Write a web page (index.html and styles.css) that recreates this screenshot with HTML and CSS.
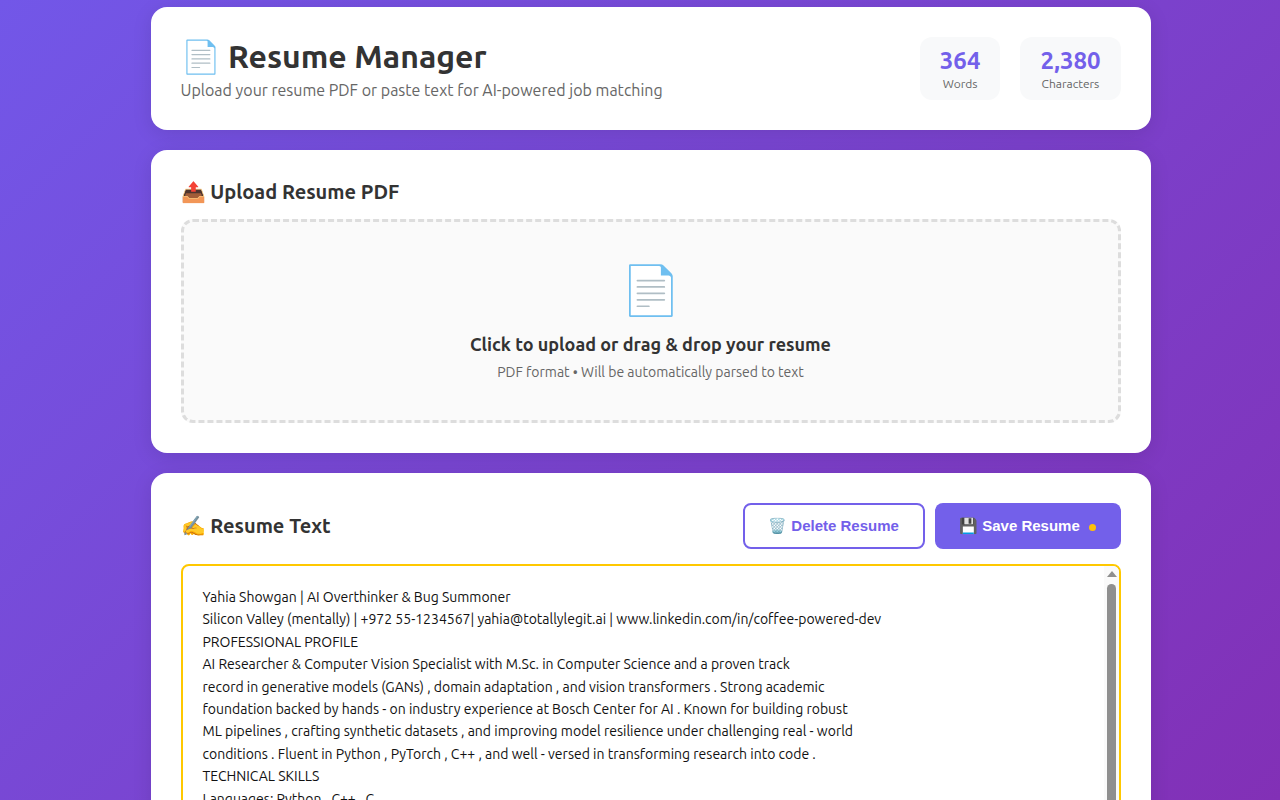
FILE: index.html
```html
<!DOCTYPE html>
<html lang="en">
<head>
<meta charset="utf-8">
<title>Resume Manager</title>
<link rel="stylesheet" href="styles.css">
</head>
<body>
<main class="container">
  <section class="card header">
    <div class="header-text">
      <h1 class="title">📄 Resume Manager</h1>
      <p class="subtitle">Upload your resume PDF or paste text for AI-powered job matching</p>
    </div>
    <div class="stats">
      <div class="stat"><div class="stat-value">364</div><div class="stat-label">Words</div></div>
      <div class="stat"><div class="stat-value">2,380</div><div class="stat-label">Characters</div></div>
    </div>
  </section>
  <section class="card">
    <h2 class="section-title upload-title">📤 Upload Resume PDF</h2>
    <div class="dropzone">
      <div class="drop-icon">📄</div>
      <div class="drop-title">Click to upload or drag &amp; drop your resume</div>
      <div class="drop-hint">PDF format • Will be automatically parsed to text</div>
    </div>
  </section>
  <section class="card">
    <div class="editor-head">
      <h2 class="section-title">✍️ Resume Text</h2>
      <div class="actions">
        <button class="btn btn-outline">🗑️ Delete Resume</button>
        <button class="btn btn-primary">💾 Save Resume <span class="dot"></span></button>
      </div>
    </div>
    <div class="editor-wrap">
      <textarea class="editor" spellcheck="false">Yahia Showgan | AI Overthinker &amp; Bug Summoner
Silicon Valley (mentally) | +972 55-1234567| yahia@totallylegit.ai | www.linkedin.com/in/coffee-powered-dev
PROFESSIONAL PROFILE
AI Researcher &amp; Computer Vision Specialist with M.Sc. in Computer Science and a proven track
record in generative models (GANs) , domain adaptation , and vision transformers . Strong academic
foundation backed by hands - on industry experience at Bosch Center for AI . Known for building robust
ML pipelines , crafting synthetic datasets , and improving model resilience under challenging real - world
conditions . Fluent in Python , PyTorch , C++ , and well - versed in transforming research into code .
TECHNICAL SKILLS
Languages: Python , C++ , C
Frameworks: PyTorch , TensorFlow , Keras
Tools: Docker , Git , Linux
Research: GANs , Domain Adaptation , Vision Transformers
PROFESSIONAL EXPERIENCE
Bosch Center for AI
AI Research Intern
Built ML pipelines for robust perception models
Created synthetic datasets for rare driving scenarios
EDUCATION
M.Sc. in Computer Science</textarea>
      <div class="scrollbar" aria-hidden="true">
        <span class="scroll-arrow"></span>
        <span class="scroll-thumb"></span>
      </div>
    </div>
  </section>
</main>
</body>
</html>
```
FILE: styles.css
```css
* { box-sizing: border-box; }
html, body { height: 800px; margin: 0; overflow: hidden; }
body {
  background: linear-gradient(135deg, #7257e8 0%, #8230b6 100%);
  font-family: Ubuntu, "Noto Sans", sans-serif;
  color: #333;
}
.container {
  width: 1000px;
  margin-left: 150.5px;
  padding-top: 7px;
  display: flex;
  flex-direction: column;
  gap: 20px;
}
.card {
  background: #fff;
  border-radius: 16px;
  padding: 30px;
  box-shadow: 0 4px 20px rgba(0, 0, 0, 0.1);
}
.header { display: flex; justify-content: space-between; align-items: center; }
.title { margin: -1px 0 0; font-size: 32px; font-weight: 700; line-height: 40px; }
.subtitle { margin: 5px 0 1px; font-size: 16px; line-height: 18px; color: #666; }
.stats { display: flex; gap: 20px; }
.stat { background: #f8f9fa; border-radius: 12px; padding: 10px 20px 9px; text-align: center; }
.stat-value { font-size: 24px; font-weight: 700; line-height: 28px; color: #7360ea; }
.stat-label { font-size: 12px; line-height: 14px; margin-top: 2px; color: #666; }
.section-title { margin: 0; font-size: 20px; font-weight: 700; line-height: 24px; }
.upload-title { margin-bottom: 15px; }
.dropzone {
  height: 204px;
  border: 3px dashed #ddd;
  border-radius: 12px;
  background: #fafafa;
  padding-top: 39px;
  text-align: center;
}
.drop-icon { font-size: 48px; line-height: 56px; }
.drop-title { margin-top: 16px; font-size: 18px; font-weight: 700; line-height: 22px; }
.drop-hint { margin-top: 9px; font-size: 14px; line-height: 16px; color: #666; }
.editor-head { display: flex; justify-content: space-between; align-items: center; margin-bottom: 15px; }
.actions { display: flex; gap: 10px; }
.btn {
  height: 46px;
  border-radius: 8px;
  font-family: "Liberation Sans", Arial, sans-serif;
  font-size: 15px;
  font-weight: 700;
  cursor: pointer;
}
.btn-outline { width: 182px; background: #fff; border: 2px solid #7360ea; color: #7360ea; }
.btn-primary { width: 186px; background: #7360ea; border: 0; color: #fff; }
.dot {
  display: inline-block;
  width: 7px;
  height: 7px;
  margin-left: 5px;
  border-radius: 50%;
  background: #ffc107;
}
.editor-wrap { position: relative; }
.editor {
  display: block;
  width: 100%;
  height: 400px;
  padding: 20px;
  border: 2px solid #ffc800;
  border-radius: 8px;
  outline: 0;
  resize: none;
  font-family: Ubuntu, "Noto Sans", sans-serif;
  font-size: 14px;
  line-height: 22.4px;
  color: #111;
  overflow: hidden;
  white-space: pre-wrap;
}
.scrollbar {
  position: absolute;
  top: 2px;
  right: 2px;
  bottom: 2px;
  width: 15px;
  background: #fafafa;
  border-top-right-radius: 6px;
}
.scroll-arrow {
  position: absolute;
  top: 5px;
  left: 3px;
  width: 0;
  height: 0;
  border-left: 5px solid transparent;
  border-right: 5px solid transparent;
  border-bottom: 6px solid #8f8f8f;
}
.scroll-thumb {
  position: absolute;
  top: 18px;
  left: 3px;
  width: 9px;
  height: 320px;
  border-radius: 5px;
  background: #8f8f8f;
}
```
